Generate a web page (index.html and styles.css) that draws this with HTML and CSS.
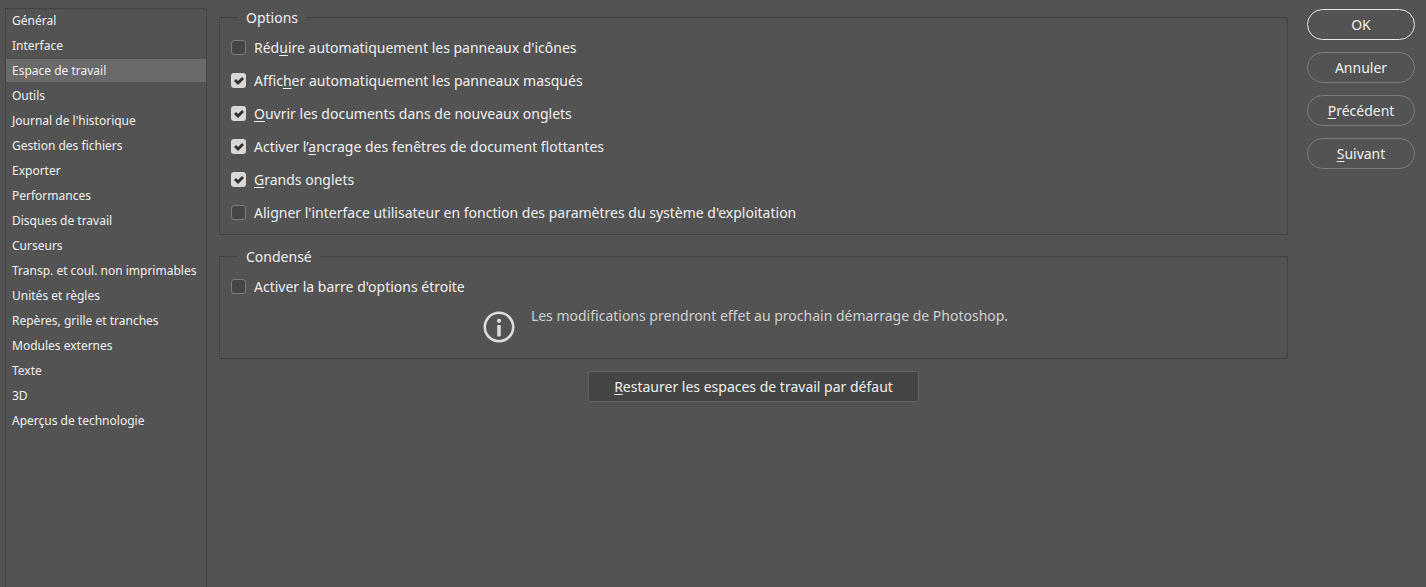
FILE: index.html
```
<!DOCTYPE html>
<html lang="fr">
<head>
    <meta charset="UTF-8">
    <meta name="viewport" content="width=device-width, initial-scale=1.0">
    <title>Préférences</title>
    <link rel="stylesheet" href="styles.css">
</head>
<body>
    <nav class="sidebar">
        <a href="#">Général</a>
        <a href="#">Interface</a>
        <a href="#" class="active">Espace de travail</a>
        <a href="#">Outils</a>
        <a href="#">Journal de l'historique</a>
        <a href="#">Gestion des fichiers</a>
        <a href="#">Exporter</a>
        <a href="#">Performances</a>
        <a href="#">Disques de travail</a>
        <a href="#">Curseurs</a>
        <a href="#">Transp. et coul. non imprimables</a>
        <a href="#">Unités et règles</a>
        <a href="#">Repères, grille et tranches</a>
        <a href="#">Modules externes</a>
        <a href="#">Texte</a>
        <a href="#">3D</a>
        <a href="#">Aperçus de technologie</a>
    </nav>

    <main class="content">
        <fieldset>
            <legend>Options</legend>
            <div class="option">
                <input type="checkbox" id="collapse">
                <label for="collapse">Réd<u>u</u>ire automatiquement les panneaux d'icônes</label>
            </div>
            <div class="option">
                <input type="checkbox" id="show" checked>
                <label for="show">Affic<u>h</u>er automatiquement les panneaux masqués</label>
            </div>
            <div class="option">
                <input type="checkbox" id="tabs" checked>
                <label for="tabs"><u>O</u>uvrir les documents dans de nouveaux onglets</label>
            </div>
            <div class="option">
                <input type="checkbox" id="docking" checked>
                <label for="docking">Activer l’<u>a</u>ncrage des fenêtres de document flottantes</label>
            </div>
            <div class="option">
                <input type="checkbox" id="large" checked>
                <label for="large"><u>G</u>rands onglets</label>
            </div>
            <div class="option">
                <input type="checkbox" id="align">
                <label for="align">Aligner l'interface utilisateur en fonction des paramètres du système d'exploitation</label>
            </div>
        </fieldset>

        <fieldset>
            <legend>Condensé</legend>
            <div class="option">
                <input type="checkbox" id="narrow">
                <label for="narrow">Activer la barre d'options étroite</label>
            </div>
            <div class="info">
                <svg width="32" height="32" viewBox="0 0 32 32">
                    <circle cx="16" cy="16" r="14.2" fill="none" stroke="#dcdcdc" stroke-width="2.6"/>
                    <circle cx="16" cy="9.8" r="2.1" fill="#dcdcdc"/>
                    <rect x="14.2" y="14" width="3.6" height="11.5" rx="1" fill="#dcdcdc"/>
                </svg>
                <p>Les modifications prendront effet au prochain démarrage de Photoshop.</p>
            </div>
        </fieldset>

        <button type="button" class="restore"><u>R</u>estaurer les espaces de travail par défaut</button>
    </main>

    <div class="actions">
        <button type="button" class="primary">OK</button>
        <button type="button">Annuler</button>
        <button type="button"><u>P</u>récédent</button>
        <button type="button"><u>S</u>uivant</button>
    </div>
</body>
</html>
```
FILE: styles.css
```
* {
    box-sizing: border-box;
}

body {
    margin: 0;
    padding: 8px 11px 0 5px;
    min-height: 100vh;
    display: flex;
    background-color: #535353;
    color: #f0f0f0;
    font-family: Tahoma, "Noto Sans", sans-serif;
    font-size: 14px;
    line-height: 19px;
}

u {
    text-underline-offset: 2px;
    text-decoration-thickness: 1px;
}

.sidebar {
    flex: 0 0 202px;
    display: flex;
    flex-direction: column;
    gap: 2px;
    border: 1px solid #434343;
    border-bottom: none;
    font-size: 12px;
    line-height: 23px;
}

.sidebar a {
    padding-left: 6px;
    color: inherit;
    text-decoration: none;
    white-space: nowrap;
}

.sidebar .active {
    background-color: #6a6a6a;
}

.content {
    flex: 1;
    margin: 0 19px 0 12px;
    display: flex;
    flex-direction: column;
}

fieldset {
    margin: 0 0 12px;
    padding: 4px 11px 5px;
    border: 1px solid #434343;
    border-radius: 1px;
}

legend {
    margin-left: 7px;
    padding: 0 8px;
}

.option {
    height: 33px;
    display: flex;
    align-items: center;
    gap: 8px;
}

.option input {
    appearance: none;
    width: 15px;
    height: 15px;
    margin: 0;
    border: 1px solid #7b7b7b;
    border-radius: 3px;
    background-color: #464646;
}

.option input:checked {
    border: none;
    background-color: #d8d8d8;
}

.option input:checked::before {
    content: "";
    display: block;
    height: 15px;
    background-color: #303030;
    clip-path: polygon(3px 8px, 5px 6px, 7px 8px, 11px 4px, 13px 6px, 7px 12px);
}

.info {
    display: flex;
    justify-content: center;
    gap: 16px;
    margin: 3px 16px 10px 0;
}

.info svg {
    margin-top: 5px;
}

.info p {
    margin: 0;
    color: #d0d0d0;
}

button {
    height: 31px;
    padding: 0;
    border: 1px solid #7b7b7b;
    border-radius: 16px;
    background: none;
    color: inherit;
    font: inherit;
    cursor: pointer;
}

.restore {
    align-self: center;
    padding: 0 25px;
    border-color: #626262;
    border-radius: 3px;
    background-color: #454545;
}

.actions {
    flex: 0 0 108px;
    display: flex;
    flex-direction: column;
    gap: 12px;
    padding-top: 1px;
}

.actions .primary {
    border-color: #e6e6e6;
}
```
